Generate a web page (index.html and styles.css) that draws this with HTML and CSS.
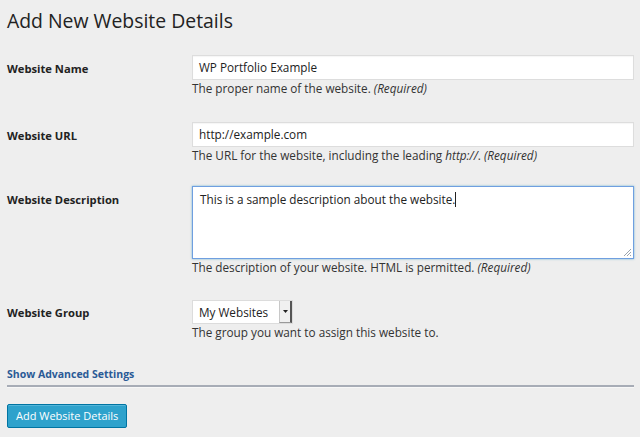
FILE: index.html
```html
<!DOCTYPE html>
<html>
<head>
<meta charset="utf-8">
<link rel="stylesheet" href="styles.css">
</head>
<body>
<div class="wrap">
  <h2 class="title">Add New Website Details</h2>
  <div class="form">
    <div class="row row-name">
      <div class="label">Website Name</div>
      <div class="field">
        <div class="input">WP Portfolio Example</div>
        <div class="desc">The proper name of the website. <em>(Required)</em></div>
      </div>
    </div>
    <div class="row row-url">
      <div class="label">Website URL</div>
      <div class="field">
        <div class="input">http://example.com</div>
        <div class="desc">The URL for the website, including the leading <em>http://</em>. <em>(Required)</em></div>
      </div>
    </div>
    <div class="row row-desc">
      <div class="label">Website Description</div>
      <div class="field">
        <div class="textarea">This is a sample description about the website.<span class="caret"></span>
          <svg class="grip" width="9" height="9" viewBox="0 0 9 9"><path d="M8 1 L1 8 M8 4 L4 8 M8 7 L7 8" stroke="#9aa3ad" stroke-width="1"/></svg>
        </div>
        <div class="desc">The description of your website. HTML is permitted. <em>(Required)</em></div>
      </div>
    </div>
    <div class="row row-group">
      <div class="label">Website Group</div>
      <div class="field">
        <div class="select"><span class="sel-text">My Websites</span><span class="sel-btn"><svg width="5" height="3" viewBox="0 0 5 3"><path d="M0 0H5L2.5 3Z" fill="#222"/></svg></span></div>
        <div class="desc">The group you want to assign this website to.</div>
      </div>
    </div>
  </div>
  <div class="advanced"><a class="adv-link">Show Advanced Settings</a></div>
  <div class="submit"><span class="button">Add Website Details</span></div>
</div>
</body>
</html>
```
FILE: styles.css
```css
html, body {
  margin: 0;
  padding: 0;
  background: #eeeeee;
}
body {
  font-family: "Open Sans", "Liberation Sans", sans-serif;
  color: #333;
  font-size: 11.75px;
}
.wrap {
  padding: 0 6px 0 7px;
}
.title {
  margin: 0;
  padding-top: 7px;
  font-size: 19.4px;
  font-weight: 400;
  line-height: 28px;
  color: #222;
}
.form {
  margin-top: 20px;
}
.row {
  display: flex;
}
.label {
  width: 185px;
  flex: none;
  font-weight: 700;
  color: #222;
  font-size: 11.2px;
}
.field {
  flex: 1;
}
.input {
  height: 23px;
  border: 1px solid #dddddd;
  background: #fff;
  box-shadow: inset 0 1px 1px rgba(0,0,0,0.04);
  padding: 0 6px;
  line-height: 23px;
  color: #222;
}
.desc {
  line-height: 17px;
  color: #333;
}
.row-name .label { padding-top: 6px; }
.row-url { margin-top: 25px; }
.row-url .label { padding-top: 6px; }
.row-desc { margin-top: 22px; }
.row-desc .label { padding-top: 6px; }
.textarea {
  position: relative;
  border: 1px solid #6f9fe0;
  box-shadow: 0 0 2px rgba(30,140,190,0.6);
  background: #fff;
  padding: 3px 7px;
  line-height: 18px;
  color: #222;
  box-sizing: border-box;
  height: 73px;
}
.caret {
  display: inline-block;
  width: 1px;
  height: 15px;
  background: #222;
  vertical-align: -3px;
}
.grip {
  position: absolute;
  right: 1px;
  bottom: 1px;
}
.row-group { margin-top: 24px; }
.row-group .label { padding-top: 5px; }
.select {
  display: inline-flex;
  height: 24px;
  box-sizing: border-box;
  border: 1px solid #dcdcdc;
  background: #fff;
  align-items: stretch;
}
.sel-text {
  padding: 0 8px 0 6px;
  line-height: 22px;
  color: #222;
  width: 72px;
}
.sel-btn {
  width: 10px;
  display: flex;
  align-items: center;
  justify-content: center;
  background: #f0f0f0;
  border-left: 1px solid #c8c8c8;
  border-right: 2px solid #555;
  border-bottom: 1px solid #999;
}
.advanced {
  margin-top: 24px;
  padding-bottom: 3px;
  border-bottom: 2px solid #a7acb6;
  box-shadow: 0 1px 0 #f7f7f7;
}
.adv-link {
  color: #2a5a96;
  font-weight: 700;
  font-size: 10.5px;
  line-height: 16px;
}
.submit {
  margin-top: 17px;
}
.button {
  display: inline-block;
  height: 24px;
  box-sizing: border-box;
  padding: 0 8px;
  background: #2ea2cc;
  border: 1px solid #0074a2;
  border-radius: 2px;
  box-shadow: inset 0 1px 0 rgba(120,200,230,0.5);
  color: #fff;
  font-size: 11px;
  line-height: 22px;
}
```
